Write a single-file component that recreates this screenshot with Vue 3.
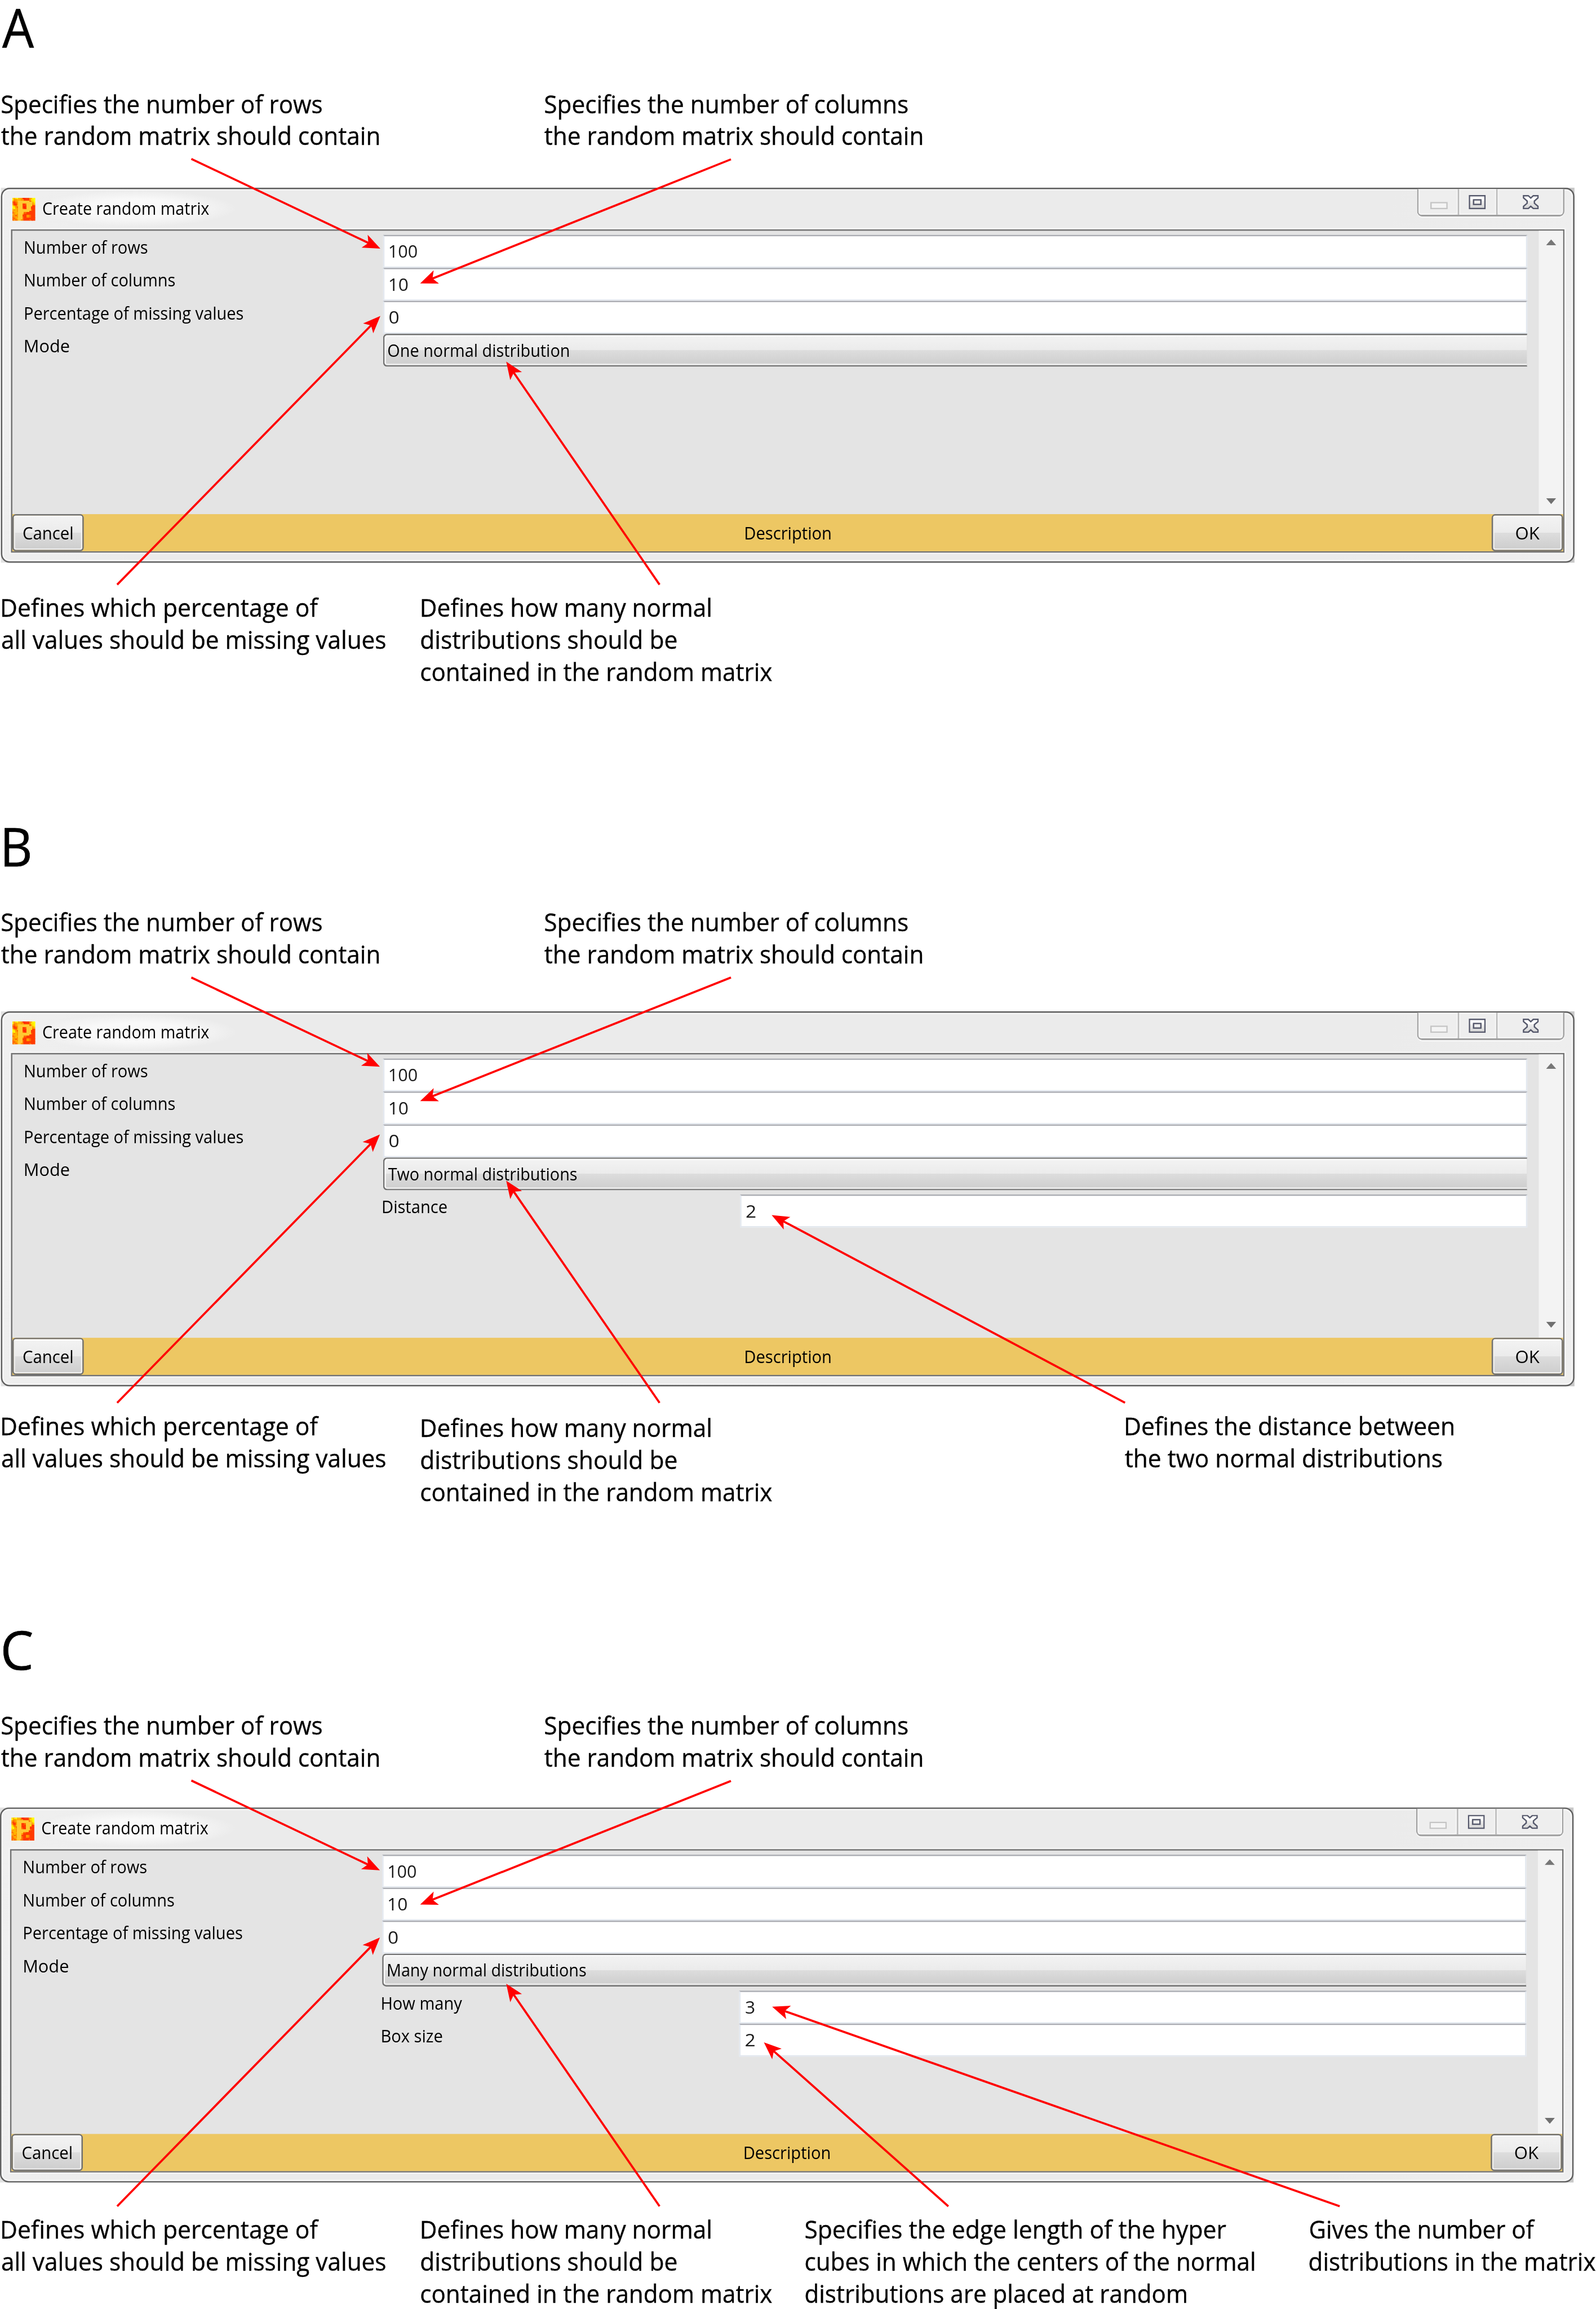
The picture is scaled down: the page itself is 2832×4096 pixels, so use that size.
<script setup>
// Stretches a line of text so that its ink runs from x0 to x1 in its own box.
// The ink is measured at ten times the size, since canvas bounds are whole pixels.
const ctx = document.createElement('canvas').getContext('2d')
const vFit = {
  mounted(el, { value: [x0, x1] }) {
    const cs = getComputedStyle(el)
    ctx.font = `${cs.fontWeight} ${parseFloat(cs.fontSize) * 10}px ${cs.fontFamily}`
    const m = ctx.measureText(el.textContent.trim())
    const left = -m.actualBoundingBoxLeft / 10
    const right = m.actualBoundingBoxRight / 10
    const k = (x1 - x0) / (right - left)
    el.style.transform = `translateX(${x0 - left * k}px) scaleX(${k})`
  },
}

const upper = [
  { col: 1, lines: [['Specifies the number of rows', 4, 703], ['the random matrix should contain', 3, 828]] },
  { col: 2, lines: [['Specifies the number of columns', 272, 1064], ['the random matrix should contain', 271, 1096]] },
]
const missing = { col: 1, lines: [['Defines which percentage of', 5, 697], ['all values should be missing values', 4, 842]] }
const howMany = {
  col: 2,
  lines: [['Defines how many normal', 3, 633], ['distributions should be', 1, 559], ['contained in the random matrix', 1, 768]],
}

const rows = [
  { label: 'Number of rows', lx: [28, 295], value: '100', vx: [14, 74] },
  { label: 'Number of columns', lx: [28, 355], value: '10', vx: [14, 54] },
  { label: 'Percentage of missing values', lx: [28, 504], value: '0', vx: [14, 34] },
]

const panels = [
  {
    id: 'A', cls: 'panel-a', hx: [5, 75], mode: 'One normal distribution', mx: [11, 406], subs: [],
    lower: [missing, howMany],
  },
  {
    id: 'B', cls: 'panel-b', hx: [10, 65], mode: 'Two normal distributions', mx: [11, 423],
    subs: [{ label: 'Distance', lx: [0, 139], value: '2', vx: [14, 34] }],
    lower: [
      missing,
      { ...howMany, low: true },
      { col: 4, lines: [['Defines the distance between', 2, 718], ['the two normal distributions', 0, 692]] },
    ],
  },
  {
    id: 'C', cls: 'panel-c', hx: [6, 71], mode: 'Many normal distributions', mx: [13, 445],
    subs: [
      { label: 'How many', lx: [0, 175], value: '3', vx: [14, 33] },
      { label: 'Box size', lx: [0, 131], value: '2', vx: [14, 34] },
    ],
    lower: [
      missing,
      howMany,
      {
        col: 3,
        lines: [
          ['Specifies the edge length of the hyper', 1, 920],
          ['cubes in which the centers of the normal', 1, 981],
          ['distributions are placed at random', 1, 833],
        ],
      },
      { col: 5, lines: [['Gives the number of', 1, 493], ['distributions in the matrix', 0, 625]] },
    ],
  },
]

const arrows = [
  [418, 347, 831, 543], [1597, 348, 918, 619], [256, 1277, 831, 690], [1441, 1277, 1106, 790],
  [418, 2135, 830, 2330], [1597, 2135, 918, 2405], [256, 3064, 830, 2478], [1441, 3064, 1106, 2579],
  [2458, 3064, 1686, 2654],
  [418, 3889, 830, 4085], [1597, 3890, 918, 4160], [256, 4819, 830, 4232], [1441, 4819, 1106, 4333],
  [2072, 4819, 1669, 4461], [2927, 4819, 1687, 4383],
].map(([x1, y1, x2, y2]) => ({
  len: Math.hypot(x2 - x1, y2 - y1),
  t: `translate(${x2} ${y2}) rotate(${(Math.atan2(y2 - y1, x2 - x1) * 180) / Math.PI})`,
}))

// 16 x 16 application icon, one letter per pixel.
const palette = { y: '#ffe600', Y: '#ffff00', g: '#ffb400', o: '#ff9600', d: '#ff6a00', r: '#ff3c00', R: '#ff2000', p: '#ffc832' }
const icon = [
  'ygyYggoRRrrrogYY', 'YoogggoorrrroyyY', 'odogppppppppdgyY', 'drdoppppppppppgy', 'orroppprrdppppog',
  'yodgppprrrpppyrr', 'YyodppprRrppprrr', 'yYgopppdrrppprrr', 'gogopppppppppdrr', 'oggopppppppprrrr',
  'doggppppddrrrrrr', 'gogoppporrrrrrrr', 'oodoppprrroodrrr', 'dogopppdrroodrrr', 'ddogpppdrrrrrrrr', 'dodoppodrrrrdrrr',
].flatMap((line, y) => [...line].map((c, x) => ({ x, y, c: palette[c] })))
</script>

<template>
  <div class="viewport">
    <main class="page">
      <section v-for="p in panels" :key="p.id" class="panel" :class="p.cls">
        <h1 class="letter"><span v-fit="p.hx" class="fit">{{ p.id }}</span></h1>
        <div class="captions top">
          <div v-for="(c, i) in upper" :key="i" class="caption" :class="'col' + c.col">
            <div v-for="l in c.lines" :key="l[0]" class="line"><span v-fit="[l[1], l[2]]" class="fit">{{ l[0] }}</span></div>
          </div>
        </div>

        <div class="shell">
          <div class="dialog">
            <header class="titlebar">
              <svg class="app-icon" viewBox="0 0 16 16" shape-rendering="crispEdges">
                <rect v-for="(q, i) in icon" :key="i" :x="q.x" :y="q.y" width="1.05" height="1.05" :fill="q.c" />
              </svg>
              <div class="title"><span v-fit="[17, 380]" class="fit">Create random matrix</span></div>
              <div class="winbtns">
                <div class="wb min"><svg width="38" height="16"><rect x="1.5" y="1.5" width="35" height="13" fill="#f4f4f4" stroke="#c4c4c4" stroke-width="3" /></svg></div>
                <div class="wb max">
                  <svg width="37" height="31">
                    <defs><linearGradient id="wg" x1="0" y1="0" x2="0" y2="1"><stop offset=".35" stop-color="#fff" /><stop offset=".4" stop-color="#eee" /><stop offset="1" stop-color="#d4d4d4" /></linearGradient></defs>
                    <rect x="1.5" y="1.5" width="34" height="28" fill="url(#wg)" stroke="#55586b" stroke-width="3" />
                    <rect x="10.5" y="10.5" width="16" height="10" fill="#eee" stroke="#55586b" stroke-width="3" />
                  </svg>
                </div>
                <div class="wb close">
                  <svg width="35" height="31" viewBox="0 0 11 10" preserveAspectRatio="none">
                    <path d="M.5 .5H3.8L5.5 2.1L7.2 .5H10.5V2L8 4.2V5.8L10.5 8V9.5H7.2L5.5 7.9L3.8 9.5H.5V8L3 5.8V4.2L.5 2Z" fill="url(#wg)" stroke="#55586b" stroke-width=".95" />
                  </svg>
                </div>
              </div>
            </header>

            <div class="client">
              <div class="body">
                <div class="form">
                  <div v-for="r in rows" :key="r.label" class="row">
                    <div class="label"><span v-fit="r.lx" class="fit">{{ r.label }}</span></div>
                    <div class="field"><span v-fit="r.vx" class="fit">{{ r.value }}</span></div>
                  </div>
                  <div class="row">
                    <div class="label"><span v-fit="[28, 124]" class="fit">Mode</span></div>
                    <div class="combo"><span v-fit="[p.mx[0] - 3, p.mx[1] - 3]" class="fit">{{ p.mode }}</span></div>
                  </div>
                  <div class="subs">
                    <div v-for="s in p.subs" :key="s.label" class="row sub">
                      <div class="label"><span v-fit="s.lx" class="fit">{{ s.label }}</span></div>
                      <div class="field"><span v-fit="s.vx" class="fit">{{ s.value }}</span></div>
                    </div>
                  </div>
                </div>
                <div class="scroll">
                  <svg width="22" height="13"><path d="M11 0L22 12.5H0Z" fill="#777" /></svg>
                  <svg width="22" height="13"><path d="M0 0H22L11 13Z" fill="#707070" /></svg>
                </div>
              </div>
              <footer class="footer">
                <div class="btn cancel"><span v-fit="[21, 128]" class="fit">Cancel</span></div>
                <div class="desc"><span v-fit="[1446, 1632]" class="fit">Description</span></div>
                <div class="btn ok"><span v-fit="[50, 102]" class="fit">OK</span></div>
              </footer>
            </div>
          </div>
        </div>

        <div class="captions bottom">
          <div v-for="(c, i) in p.lower" :key="i" class="caption" :class="['col' + c.col, { low: c.low }]">
            <div v-for="l in c.lines" :key="l[0]" class="line"><span v-fit="[l[1], l[2]]" class="fit">{{ l[0] }}</span></div>
          </div>
        </div>
      </section>

      <svg class="arrows" width="3487" height="5044" viewBox="0 0 3487 5044">
        <g v-for="(a, i) in arrows" :key="i" :transform="a.t" fill="#f00">
          <rect :x="-a.len" y="-2.3" :width="a.len - 26" height="4.6" />
          <path d="M0 0L-38 -15.5L-29 0L-38 15.5Z" />
        </g>
      </svg>
    </main>
  </div>
</template>

<style>
html,
body {
  margin: 0;
  background: #fff;
  overflow: hidden;
}
</style>

<style scoped>
.viewport {
  width: 2832px;
  height: 4096px;
  overflow: hidden;
  background: #fff;
}
.page {
  position: relative;
  width: 3487px;
  height: 5044px;
  transform: scale(0.81216);
  transform-origin: 0 0;
  font-family: "Open Sans", "Noto Sans", sans-serif;
  color: #000;
}
.page * {
  box-sizing: border-box;
}
.fit {
  display: inline-block;
  white-space: pre;
  transform-origin: 0 0;
}
.panel {
  display: flex;
  flex-direction: column;
}
.panel-a {
  height: 1787px;
}
.panel-b {
  height: 1755px;
}
.panel-c {
  height: 1502px;
}
.letter {
  margin: 0;
  height: 191px;
  font-size: 117.6px;
  font-weight: 400;
  line-height: 119px;
  -webkit-text-stroke: 0.8px #000;
}
.captions {
  display: grid;
  grid-template-columns: 919px 840px 699px 403px 626px;
  font-size: 55px;
  line-height: 70px;
  -webkit-text-stroke: 0.5px #000;
}
.line {
  height: 70px;
}
.top {
  height: 219px;
}
.panel-b .top {
  height: 231px;
}
.panel-c .top {
  height: 215px;
}
.bottom {
  margin-top: 62px;
}
.panel-b .bottom {
  margin-top: 51px;
}
.panel-c .bottom {
  margin-top: 67px;
}
.low {
  padding-top: 4px;
}
.col1 {
  grid-column: 1;
}
.col2 {
  grid-column: 2;
}
.col3 {
  grid-column: 3;
}
.col4 {
  grid-column: 4;
}
.col5 {
  grid-column: 5;
}
.shell {
  flex: none;
  width: 3438px;
  height: 819px;
  margin-left: 2px;
  background: linear-gradient(90deg, #e2e2e2, #c8c8c8);
}
.panel-c .shell {
  margin-left: -0.5px;
}
.dialog {
  display: flex;
  flex-direction: column;
  width: 3438px;
  height: 819px;
  padding: 0 19px 19px;
  border: 3px solid #5e5e5e;
  border-radius: 19px;
  background: linear-gradient(100deg, #f0f0f0, #ebebeb 12%, #ebebeb 85%, #efefef);
  box-shadow: inset 0 0 0 3px #f7f7f7;
  font-size: 38.5px;
}
.titlebar {
  display: flex;
  height: 88px;
  flex: none;
}
.app-icon {
  width: 50px;
  height: 50px;
  margin: 19px 0 0 3px;
}
.title {
  width: 440px;
  height: 79px;
  margin-top: 3px;
  line-height: 76px;
  background: radial-gradient(closest-side, #f9f9f9 50%, rgba(249, 249, 249, 0));
}
.winbtns {
  display: flex;
  width: 322px;
  height: 60px;
  margin-left: auto;
  border: 3px solid #9e9e9e;
  border-top: 0;
  border-bottom-width: 4px;
  border-radius: 0 0 12px 12px;
  background: #eee;
  box-shadow: 0 3px 0 #f6f6f6;
}
.wb {
  box-shadow: inset 0 0 0 3px #f4f4f4;
  border-radius: 0 0 6px 6px;
}
.min {
  width: 86px;
  padding: 28px 0 0 26px;
}
.max {
  width: 87px;
  padding: 13px 0 0 21px;
  border: solid #b9b9b9;
  border-width: 0 3px;
  border-radius: 0;
}
.close {
  flex: 1;
  padding: 13px 0 0 55px;
}
.wb svg {
  display: block;
}
.client {
  display: flex;
  flex-direction: column;
  height: 706px;
  border: 3px solid #727272;
  background: #e4e4e4;
  box-shadow: 0 0 0 3px #f6f6f6;
}
.body {
  display: flex;
  height: 619px;
}
.form {
  width: 3310px;
  margin-right: 25px;
  padding-top: 9px;
}
.row {
  display: grid;
  grid-template-columns: 810px 2500px;
  height: 72px;
}
.label {
  line-height: 52px;
}
.field {
  height: 72px;
  padding-left: 0;
  border: 3px solid #e3e8ef;
  border-top-color: #abadb3;
  background: #fff;
  line-height: 64px;
  color: #1a1a1a;
}
.field .fit {
  margin-left: -3px;
}
.combo {
  height: 72px;
  border: 3px solid #707070;
  border-right-color: #dcdcdc;
  border-right-width: 1px;
  border-radius: 9px 0 0 9px;
  background: linear-gradient(#f3f3f3, #ebebeb 50%, #dddddd 50%, #cdcdcd);
  box-shadow: inset 3px 3px 0 #fbfbfb, inset 0 -4px 0 #e8e8e8;
  line-height: 64px;
}
.subs {
  margin: 9px 0 0 810px;
}
.sub {
  grid-template-columns: 780px 1720px;
}
.scroll {
  display: flex;
  flex-direction: column;
  justify-content: space-between;
  align-items: center;
  width: 53px;
  padding: 19px 0 22px;
  background: #f3f3f3;
}
.footer {
  display: flex;
  height: 81px;
  background: #edc763;
}
.btn {
  height: 81px;
  border: 3px solid #707070;
  border-radius: 8px;
  background: linear-gradient(#f3f3f3, #ebebeb 50%, #dddddd 50%, #cdcdcd);
  box-shadow: inset 0 3px 0 #fff, inset 0 0 0 3px #f0f0f0;
  line-height: 75px;
}
.cancel {
  width: 156px;
}
.ok {
  width: 156px;
}
.desc {
  flex: 1;
  line-height: 81px;
}
.arrows {
  position: absolute;
  left: 0;
  top: 0;
}
</style>
